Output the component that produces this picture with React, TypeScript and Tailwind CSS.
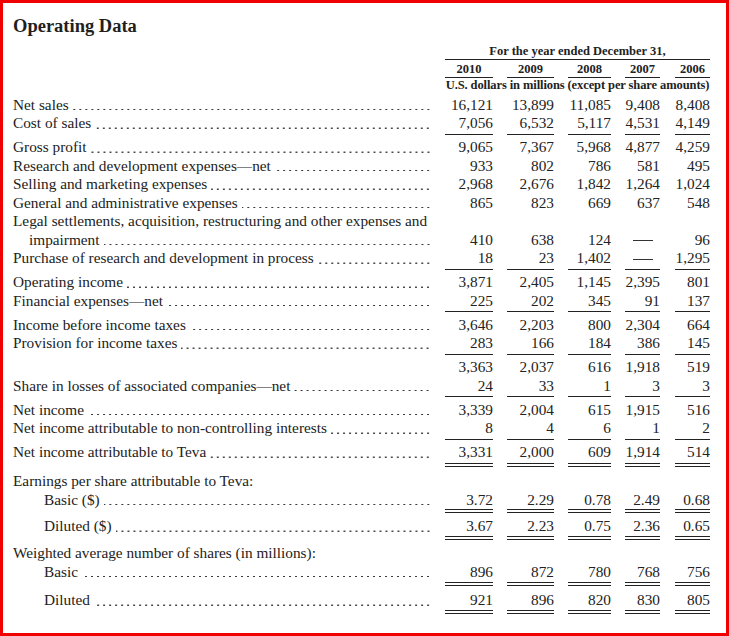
type Rule = "none" | "single" | "double";

type Row = {
  label: string;
  values?: string[];
  indent?: 0 | 1 | 2;
  rule?: Rule;
  // spacing below the row, written out in full so Tailwind picks it up
  after?: string;
  // padding between the text line and the first rule
  gap?: string;
  dots?: boolean;
};

const rows: Row[] = [
  { label: "Net sales", values: ["16,121", "13,899", "11,085", "9,408", "8,408"] },
  { label: "Cost of sales", values: ["7,056", "6,532", "5,117", "4,531", "4,149"], rule: "single", gap: "pb-[1px]", after: "mb-[3.5px]" },
  { label: "Gross profit", values: ["9,065", "7,367", "5,968", "4,877", "4,259"] },
  { label: "Research and development expenses—net", values: ["933", "802", "786", "581", "495"] },
  { label: "Selling and marketing expenses", values: ["2,968", "2,676", "1,842", "1,264", "1,024"] },
  { label: "General and administrative expenses", values: ["865", "823", "669", "637", "548"] },
  { label: "Legal settlements, acquisition, restructuring and other expenses and", dots: false },
  { label: "impairment", indent: 1, values: ["410", "638", "124", "—", "96"] },
  { label: "Purchase of research and development in process", values: ["18", "23", "1,402", "—", "1,295"], rule: "single", gap: "pb-[1px]", after: "mb-[3.5px]" },
  { label: "Operating income", values: ["3,871", "2,405", "1,145", "2,395", "801"] },
  { label: "Financial expenses—net", values: ["225", "202", "345", "91", "137"], rule: "single", gap: "pb-[1px]", after: "mb-[3.5px]" },
  { label: "Income before income taxes", values: ["3,646", "2,203", "800", "2,304", "664"] },
  { label: "Provision for income taxes", values: ["283", "166", "184", "386", "145"], rule: "single", gap: "pb-[1px]", after: "mb-[3.5px]" },
  { label: "", dots: false, values: ["3,363", "2,037", "616", "1,918", "519"] },
  { label: "Share in losses of associated companies—net", values: ["24", "33", "1", "3", "3"], rule: "single", gap: "pb-[1px]", after: "mb-[3.5px]" },
  { label: "Net income", values: ["3,339", "2,004", "615", "1,915", "516"] },
  { label: "Net income attributable to non-controlling interests", values: ["8", "4", "6", "1", "2"], rule: "single", gap: "pb-[1px]", after: "mb-[3.5px]" },
  { label: "Net income attributable to Teva", values: ["3,331", "2,000", "609", "1,914", "514"], rule: "double", gap: "pb-[1.5px]", after: "mb-[5px]" },
  { label: "Earnings per share attributable to Teva:", dots: false },
  { label: "Basic ($)", indent: 2, values: ["3.72", "2.29", "0.78", "2.49", "0.68"], rule: "double", after: "mb-[4px]" },
  { label: "Diluted ($)", indent: 2, values: ["3.67", "2.23", "0.75", "2.36", "0.65"], rule: "double", after: "mb-[4.5px]" },
  { label: "Weighted average number of shares (in millions):", dots: false },
  { label: "Basic", indent: 2, values: ["896", "872", "780", "768", "756"], rule: "double", gap: "pb-[0.75px]", after: "mb-[5.25px]" },
  { label: "Diluted", indent: 2, values: ["921", "896", "820", "830", "805"], rule: "double", gap: "pb-[0.75px]" },
];

const years = ["2010", "2009", "2008", "2007", "2006"];

const colClass = [
  "w-[48px]",
  "ml-[14px] w-[47px]",
  "ml-[14px] w-[43px]",
  "ml-[14px] w-[35px]",
  "ml-[15px] w-[35px]",
];

const indentClass = ["", "pl-[16px]", "pl-[31px]"];

function Cell({ value, rule, gap }: { value: string; rule: Rule; gap?: string }) {
  const text =
    value === "—" ? (
      // the nil dash is a wide rule centred in the column
      <div className="flex h-[18.5px] justify-center pt-[9.5px]">
        <div className="h-[1px] w-[20px] bg-[#333]" />
      </div>
    ) : (
      <div className="h-[18.5px] text-right leading-[18.5px]">{value}</div>
    );

  if (rule === "single") {
    return <div className={`border-b border-[#222] ${gap ?? ""}`}>{text}</div>;
  }
  if (rule === "double") {
    return (
      <div className="border-b border-[#222] pb-[2px]">
        <div className={`border-b border-[#222] ${gap ?? ""}`}>{text}</div>
      </div>
    );
  }
  return text;
}

function DataRow({ row }: { row: Row }) {
  const showDots = row.dots !== false;
  return (
    <div className={`flex items-start ${row.after ?? ""}`}>
      <div className={`flex w-[432px] shrink-0 items-start ${indentClass[row.indent ?? 0]}`}>
        <span className="h-[18.5px] whitespace-nowrap leading-[18.5px]">{row.label}</span>
        {showDots && (
          <span className="ml-[4px] mr-[14px] h-[18.5px] flex-1 bg-[radial-gradient(circle_at_3px_13.8px,#3a3a3a_0.55px,transparent_1.05px)] bg-[length:6px_18.5px] bg-right bg-repeat-x" />
        )}
      </div>
      {row.values?.map((v, i) => (
        <div key={i} className={`shrink-0 ${colClass[i]}`}>
          <Cell value={v} rule={row.rule ?? "none"} gap={row.gap} />
        </div>
      ))}
    </div>
  );
}

export default function App() {
  return (
    <div className="h-[636px] w-[729px] border-[3px] border-[#f00000] bg-white pl-[10px] pt-[12px] text-[15.3px] text-[#222] [font-family:'Liberation_Serif','Times_New_Roman',serif]">
      {/* Title */}
      <h1 className="h-[22px] text-[18.5px] font-bold leading-[22px] text-[#1f1f1f]">Operating Data</h1>

      {/* Column header */}
      <div className="ml-[432px] mt-[6.7px] w-[265px] text-[12.5px] font-bold">
        <div className="border-b border-[#222] pb-[1px] text-center leading-[14px]">
          For the year ended December 31,
        </div>
        <div className="mt-[2.3px] flex">
          {years.map((y, i) => (
            <div key={y} className={`shrink-0 border-b border-[#222] pb-[1px] text-center leading-[14px] ${colClass[i]}`}>
              {y}
            </div>
          ))}
        </div>
        <div className="whitespace-nowrap text-center leading-[14px] tracking-[-0.1px]">
          U.S. dollars in millions (except per share amounts)
        </div>
      </div>

      {/* Rows */}
      <div className="mt-[3.6px]">
        {rows.map((row, i) => (
          <DataRow key={i} row={row} />
        ))}
      </div>
    </div>
  );
}
